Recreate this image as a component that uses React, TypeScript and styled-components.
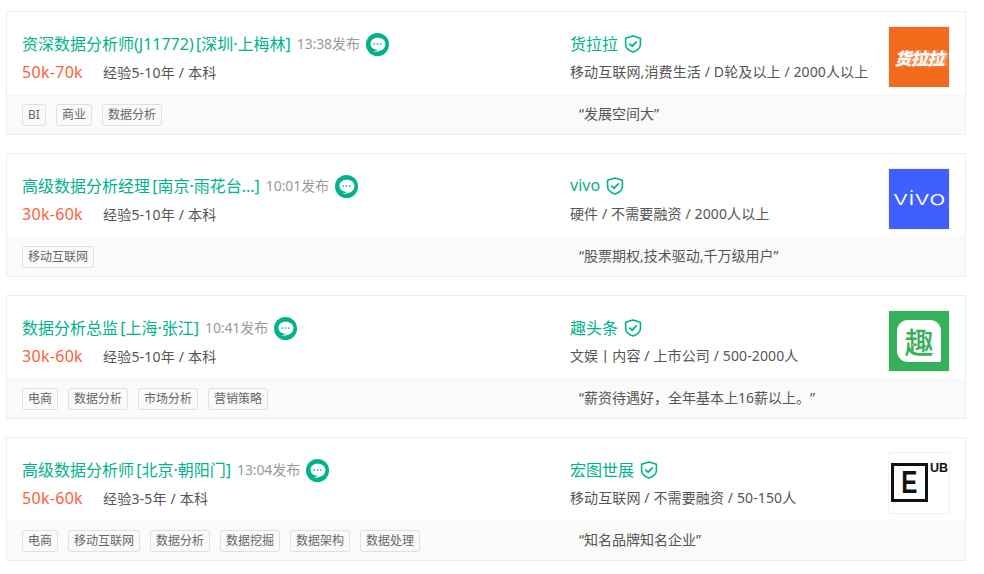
import React from "react";
import styled, { createGlobalStyle } from "styled-components";

const Global = createGlobalStyle`
  html, body { margin: 0; padding: 0; background: #fff; }
  body { font-family: "Noto Sans", "Noto Sans CJK SC", sans-serif; }
`;

const List = styled.div`
  display: flex;
  flex-direction: column;
  gap: 18px;
  width: 960px;
  padding: 11px 0 0 6px;
`;
const Card = styled.div`
  box-sizing: border-box;
  width: 960px;
  height: 124px;
  border: 1px solid #eee;
  display: flex;
  flex-direction: column;
`;
const Top = styled.div`
  height: 82px;
  flex: none;
  display: flex;
  box-sizing: border-box;
  padding: 14px 15px 0 15px;
`;
const JobCol = styled.div`
  width: 548px;
  flex: none;
`;
const CompanyCol = styled.div`
  flex: 1;
  min-width: 0;
`;
const TitleRow = styled.div`
  display: flex;
  align-items: center;
  height: 34px;
`;
const JobTitle = styled.span`
  font-size: 16px;
  color: #00b38a;
  white-space: nowrap;
  word-spacing: -2px;
`;
const Time = styled.span`
  font-size: 14px;
  color: #999;
  margin-left: 6px;
  white-space: nowrap;
  letter-spacing: -0.1px;
`;
const Chat = styled.svg`
  width: 23px;
  height: 23px;
  margin: 2px 0 0 6px;
  flex: none;
`;
const Shield = styled.svg`
  width: 18px;
  height: 18px;
  margin: 2px 0 0 6px;
  flex: none;
`;
const MetaRow = styled.div`
  display: flex;
  align-items: center;
  height: 26px;
  margin-top: -1px;
`;
const Salary = styled.span`
  font-size: 16px;
  color: #fd5f39;
  width: 81px;
  flex: none;
  white-space: nowrap;
  letter-spacing: 0.3px;
  margin-top: -1px;
`;
const Exp = styled.span`
  font-size: 14px;
  color: #555;
  white-space: nowrap;
  letter-spacing: 0.2px;
`;
const CompanyName = styled.span`
  font-size: 16px;
  color: #00b38a;
  white-space: nowrap;
`;
const CompanyMeta = styled.div`
  font-size: 14px;
  color: #555;
  height: 26px;
  line-height: 26px;
  margin-top: -1px;
  white-space: nowrap;
  letter-spacing: 0.12px;
`;
const LogoFrame = styled.div<{ $bg: string }>`
  box-sizing: border-box;
  width: 62px;
  height: 62px;
  flex: none;
  border: 1px solid #f2f2f2;
  background: ${(p) => p.$bg};
  background-clip: padding-box;
  display: flex;
  align-items: center;
  justify-content: center;
  overflow: hidden;
  position: relative;
  color: #fff;
`;
const HuolalaMark = styled.span`
  font-family: "Noto Sans CJK SC", sans-serif;
  font-size: 17px;
  font-weight: 900;
  font-style: italic;
  letter-spacing: -0.5px;
  text-shadow: 3px 0 2px rgba(255, 255, 255, 0.4);
  margin-top: 1px;
  white-space: nowrap;
`;
const VivoMark = styled.span`
  font-family: "Inter", sans-serif;
  font-size: 20px;
  font-weight: 300;
  transform: scaleX(1.37);
  margin-top: -2px;
`;
const QuMark = styled.div`
  width: 44px;
  height: 42px;
  background: #fff;
  border-radius: 11px 11px 2px 11px;
  color: #35b15c;
  font-family: "Noto Sans CJK SC", sans-serif;
  font-size: 29px;
  font-weight: 500;
  line-height: 42px;
  text-align: center;
  position: relative;
`;
const QuDot = styled.span`
  position: absolute;
  left: 15px;
  top: 24px;
  width: 2px;
  height: 2px;
  background: #f5a03a;
`;
const HubMark = styled.div`
  position: absolute;
  left: 2px;
  top: 10px;
  box-sizing: border-box;
  width: 37px;
  height: 39px;
  border: 3px solid #111;
  color: #111;
  display: flex;
  align-items: center;
  justify-content: center;
`;
const HubLetter = styled.span`
  font-family: "Liberation Sans", sans-serif;
  font-size: 31px;
  font-weight: 700;
  line-height: 1;
  transform: scaleX(0.78);
`;
const HubSuffix = styled.span`
  position: absolute;
  left: 41px;
  top: 10px;
  color: #111;
  font-family: "Liberation Sans", sans-serif;
  font-size: 12.5px;
  font-weight: 700;
  line-height: 10px;
`;
const Bottom = styled.div`
  flex: 1;
  background: #fafafa;
  display: flex;
  align-items: center;
  padding-left: 15px;
`;
const Tags = styled.div`
  width: 548px;
  flex: none;
  display: flex;
  gap: 10px;
  padding-top: 2px;
`;
const Tag = styled.span`
  box-sizing: border-box;
  height: 22px;
  line-height: 20px;
  padding: 0 5px;
  border: 1px solid #e0e0e0;
  border-radius: 3px;
  background: #fafafa;
  font-size: 12px;
  color: #666;
  white-space: nowrap;
`;
const Quote = styled.span`
  font-size: 14px;
  color: #555;
  margin: -2px 0 0 9px;
  white-space: nowrap;
  text-spacing-trim: space-all;
`;

const ChatIcon = () => (
  <Chat viewBox="0 0 23 23">
    <circle cx="11.5" cy="11.5" r="11.5" fill="#00b38a" />
    <path
      d="M11.5 4.8c-4 0-7 2.6-7 6s3 6 7 6c.2 0 .5 0 .7 0-1.5 1-3.7 1.6-5.2 1.7 3.6.6 9.2-.5 11-3.2.8-1.2 1.4-2.8 1.4-4.5 0-3.4-3.2-6-7.9-6z"
      fill="#fff"
    />
    <circle cx="8.4" cy="11" r=".85" fill="#00b38a" />
    <circle cx="11.6" cy="11" r=".85" fill="#00b38a" />
    <circle cx="14.8" cy="11" r=".85" fill="#00b38a" />
  </Chat>
);

const ShieldIcon = () => (
  <Shield viewBox="0 0 18 18">
    <path
      d="M9 .9 1.6 3.2v6.4c0 3.4 3.1 6 7.4 7.5 4.3-1.5 7.4-4.1 7.4-7.5V3.2L9 .9z"
      fill="none"
      stroke="#00b38a"
      strokeWidth="1.6"
      strokeLinejoin="round"
    />
    <path
      d="M5.3 8.6 8.1 11.2l4.7-4.9"
      fill="none"
      stroke="#00b38a"
      strokeWidth="1.7"
    />
  </Shield>
);

type Job = {
  title: string;
  time: string;
  salary: string;
  exp: string;
  tags: string[];
  company: string;
  meta: string;
  quote: string;
  bg: string;
  logo: React.ReactNode;
};

const jobs: Job[] = [
  {
    title: "资深数据分析师(J11772) [深圳·上梅林]",
    time: "13:38发布",
    salary: "50k-70k",
    exp: "经验5-10年 / 本科",
    tags: ["BI", "商业", "数据分析"],
    company: "货拉拉",
    meta: "移动互联网,消费生活 / D轮及以上 / 2000人以上",
    quote: "“发展空间大”",
    bg: "#f26b1d",
    logo: <HuolalaMark>货拉拉</HuolalaMark>,
  },
  {
    title: "高级数据分析经理 [南京·雨花台...]",
    time: "10:01发布",
    salary: "30k-60k",
    exp: "经验5-10年 / 本科",
    tags: ["移动互联网"],
    company: "vivo",
    meta: "硬件 / 不需要融资 / 2000人以上",
    quote: "“股票期权,技术驱动,千万级用户”",
    bg: "#415fff",
    logo: <VivoMark>vivo</VivoMark>,
  },
  {
    title: "数据分析总监 [上海·张江]",
    time: "10:41发布",
    salary: "30k-60k",
    exp: "经验5-10年 / 本科",
    tags: ["电商", "数据分析", "市场分析", "营销策略"],
    company: "趣头条",
    meta: "文娱丨内容 / 上市公司 / 500-2000人",
    quote: "“薪资待遇好，全年基本上16薪以上。”",
    bg: "#35b15c",
    logo: (
      <QuMark>
        趣<QuDot />
      </QuMark>
    ),
  },
  {
    title: "高级数据分析师 [北京·朝阳门]",
    time: "13:04发布",
    salary: "50k-60k",
    exp: "经验3-5年 / 本科",
    tags: ["电商", "移动互联网", "数据分析", "数据挖掘", "数据架构", "数据处理"],
    company: "宏图世展",
    meta: "移动互联网 / 不需要融资 / 50-150人",
    quote: "“知名品牌知名企业”",
    bg: "#fff",
    logo: (
      <>
        <HubMark>
          <HubLetter>E</HubLetter>
        </HubMark>
        <HubSuffix>UB</HubSuffix>
      </>
    ),
  },
];

export default function App() {
  return (
    <>
      <Global />
      <List>
        {jobs.map((j) => (
          <Card key={j.title}>
            <Top>
              <JobCol>
                <TitleRow>
                  <JobTitle>{j.title}</JobTitle>
                  <Time>{j.time}</Time>
                  <ChatIcon />
                </TitleRow>
                <MetaRow>
                  <Salary>{j.salary}</Salary>
                  <Exp>{j.exp}</Exp>
                </MetaRow>
              </JobCol>
              <CompanyCol>
                <TitleRow>
                  <CompanyName>{j.company}</CompanyName>
                  <ShieldIcon />
                </TitleRow>
                <CompanyMeta>{j.meta}</CompanyMeta>
              </CompanyCol>
              <LogoFrame $bg={j.bg}>{j.logo}</LogoFrame>
            </Top>
            <Bottom>
              <Tags>
                {j.tags.map((t) => (
                  <Tag key={t}>{t}</Tag>
                ))}
              </Tags>
              <Quote>{j.quote}</Quote>
            </Bottom>
          </Card>
        ))}
      </List>
    </>
  );
}
